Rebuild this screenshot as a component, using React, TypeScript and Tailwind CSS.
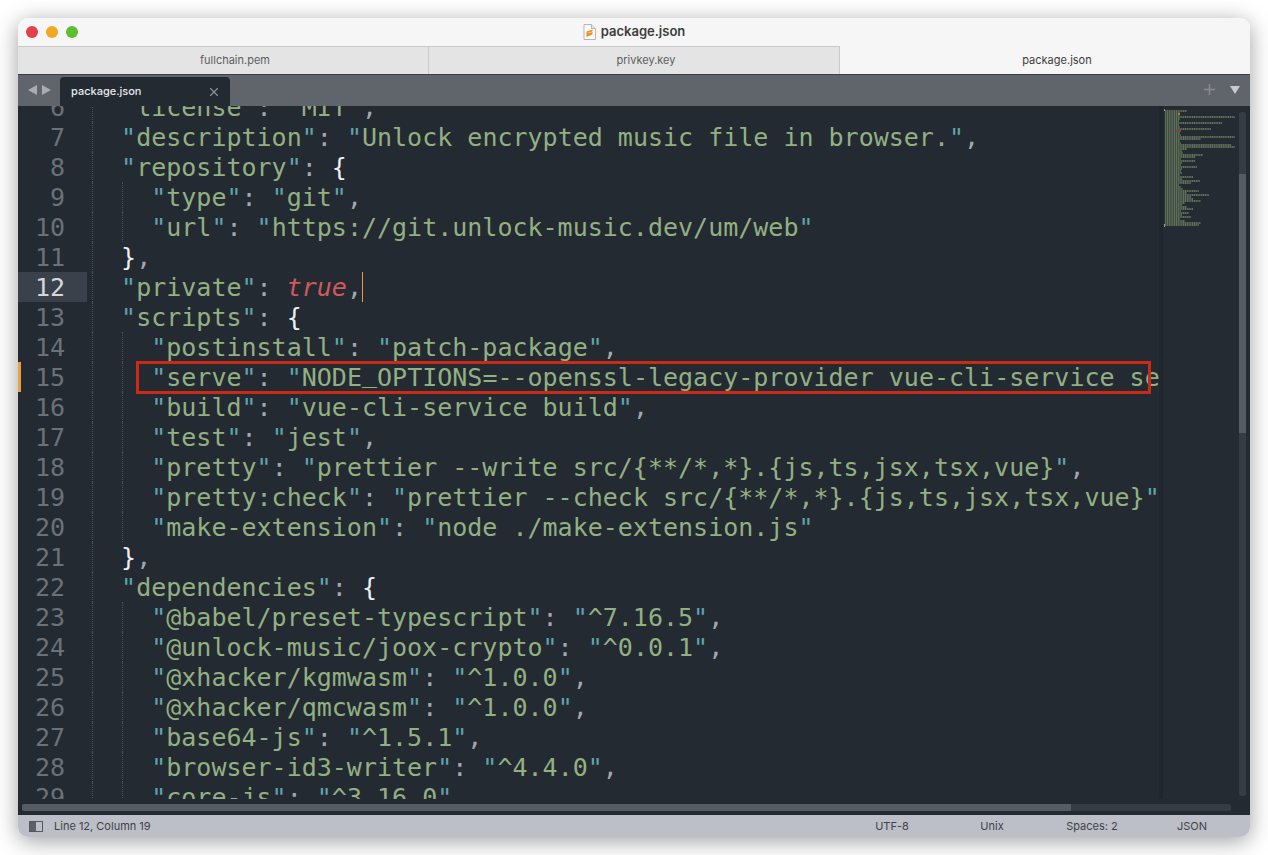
import { X } from 'lucide-react'
import type { ReactNode } from 'react'

// one token per kind of syntax colour
const Q = () => <span className="text-[#5fa3ad]">"</span>
const Str = ({ children }: { children: ReactNode }) => (
  <>
    <Q />
    <span className="text-[#93b082]">{children}</span>
    <Q />
  </>
)
const P = ({ children }: { children: string }) => <span className="text-[#a3a8b0]">{children}</span>
const Brace = ({ children }: { children: string }) => <span className="text-[#eceef0]">{children}</span>

const kv = (key: string, value: ReactNode, comma = true) => (
  <>
    <Str>{key}</Str>
    <P>: </P>
    <Str>{value}</Str>
    {comma && <P>,</P>}
  </>
)
const open = (key: string) => (
  <>
    <Str>{key}</Str>
    <P>: </P>
    <Brace>{'{'}</Brace>
  </>
)
const close = (
  <>
    <Brace>{'}'}</Brace>
    <P>,</P>
  </>
)

const lines: { n: number; level: number; code: ReactNode }[] = [
  { n: 6, level: 1, code: kv('license', 'MIT') },
  { n: 7, level: 1, code: kv('description', 'Unlock encrypted music file in browser.') },
  { n: 8, level: 1, code: open('repository') },
  { n: 9, level: 2, code: kv('type', 'git') },
  { n: 10, level: 2, code: kv('url', 'https://git.unlock-music.dev/um/web', false) },
  { n: 11, level: 1, code: close },
  {
    n: 12,
    level: 1,
    code: (
      <>
        <Str>private</Str>
        <P>: </P>
        <span className="italic text-[#d0595c]">true</span>
        <P>,</P>
        <span className="-mt-px inline-block h-[30px] w-px bg-[#e6993f] align-top" />
      </>
    ),
  },
  { n: 13, level: 1, code: open('scripts') },
  { n: 14, level: 2, code: kv('postinstall', 'patch-package') },
  {
    n: 15,
    level: 2,
    code: kv(
      'serve',
      <>
        NODE<span className="relative -top-[4px]">_</span>OPTIONS=--openssl-legacy-provider vue-cli-service serve
      </>,
    ),
  },
  { n: 16, level: 2, code: kv('build', 'vue-cli-service build') },
  { n: 17, level: 2, code: kv('test', 'jest') },
  { n: 18, level: 2, code: kv('pretty', 'prettier --write src/{**/*,*}.{js,ts,jsx,tsx,vue}') },
  { n: 19, level: 2, code: kv('pretty:check', 'prettier --check src/{**/*,*}.{js,ts,jsx,tsx,vue}') },
  { n: 20, level: 2, code: kv('make-extension', 'node ./make-extension.js', false) },
  { n: 21, level: 1, code: close },
  { n: 22, level: 1, code: open('dependencies') },
  { n: 23, level: 2, code: kv('@babel/preset-typescript', '^7.16.5') },
  { n: 24, level: 2, code: kv('@unlock-music/joox-crypto', '^0.0.1') },
  { n: 25, level: 2, code: kv('@xhacker/kgmwasm', '^1.0.0') },
  { n: 26, level: 2, code: kv('@xhacker/qmcwasm', '^1.0.0') },
  { n: 27, level: 2, code: kv('base64-js', '^1.5.1') },
  { n: 28, level: 2, code: kv('browser-id3-writer', '^4.4.0') },
  { n: 29, level: 2, code: kv('core-js', '^3.16.0') },
]

// minimap row widths, 2px per row, read off the screenshot
const miniRows = [
  22, 15, 15, 70, 15, 14, 57, 14, 15, 46, 12, 15, 16, 70, 36, 15, 16, 66, 70, 22, 17, 18, 38, 30, 16, 30, 17, 16,
  32, 17, 16, 17, 15, 28, 17, 35, 26, 14, 16, 18, 34, 22, 44, 26, 28, 36, 20, 17, 22, 28, 16, 24, 17, 26, 15, 20,
  36, 34,
]

function Minimap() {
  const d = miniRows.map((w, i) => `M2 ${i * 2 + 5}h${w}`).join('')
  return (
    <svg width="76" height="130" viewBox="0 0 76 130" className="shrink-0">
      <path d={d} stroke="#5f7059" strokeWidth="1.8" strokeDasharray="1.3 0.5" fill="none" />
      <rect x="15" y="7" width="2" height="2" fill="#b8793a" />
      <rect x="13" y="24" width="5" height="2" fill="#8a3f45" />
      <rect x="1" y="3" width="1" height="2" fill="#9a9da3" />
      <rect x="1" y="118" width="1" height="3" fill="#9a9da3" />
    </svg>
  )
}

function SublimeFile() {
  return (
    <svg width="13" height="16" viewBox="0 0 13 16" className="shrink-0">
      <path d="M1 .5h7.5L12.5 4.500V15.500H1z" fill="#fafafa" stroke="#b5b5b5" />
      <path d="M8.500.5V4.500h4" fill="#e8e8e8" stroke="#b5b5b5" />
      <path d="M3.500 7.500 9.500 5.800v1.800L3.500 9.300zM3.500 9.800l6-1.700v1.900l-6 1.700zM3.500 8.800 9.500 10.300 3.500 13z" fill="#f08c1e" />
    </svg>
  )
}

export default function App() {
  return (
    <div className="h-screen overflow-hidden bg-white px-[18px] pt-[18px] font-['Inter',sans-serif]">
      <div className="relative flex h-[819px] flex-col overflow-hidden rounded-[10px] shadow-[0_4px_22px_rgba(0,0,0,0.38)]">
        {/* Title bar */}
        <div className="relative flex h-[28px] shrink-0 items-center justify-center gap-[5px] bg-[#f6f6f6]">
          <div className="absolute left-[8px] top-[8px] flex gap-[8px]">
            <span className="h-3 w-3 rounded-full bg-[#e2404a]" />
            <span className="h-3 w-3 rounded-full bg-[#f2a823]" />
            <span className="h-3 w-3 rounded-full bg-[#5fbe2f]" />
          </div>
          <SublimeFile />
          <span className="text-[13px] font-semibold text-[#3c3c3c]">package.json</span>
        </div>

        {/* File tabs */}
        <div className="flex h-[28px] shrink-0 text-[11px]">
          <div className="flex w-[410px] items-center justify-center border-t border-[#c9c9c9] bg-[#e4e4e4] pl-[24px] text-[#5d5d5d]">
            fullchain.pem
          </div>
          <div className="flex w-[412px] items-center justify-center border-x border-t border-[#c9c9c9] bg-[#e4e4e4] pl-[24px] text-[#5d5d5d]">
            privkey.key
          </div>
          <div className="flex flex-1 items-center justify-center bg-[#f6f6f6] pl-[24px] text-[#3c3c3c]">
            package.json
          </div>
        </div>

        {/* Sublime tab bar */}
        <div className="flex h-[32px] shrink-0 items-end border-t border-[#3c3f44] bg-[#60646b]">
          <div className="flex h-full w-[42px] items-center gap-[5px] pb-[2px] pl-[10px]">
            <svg width="9" height="10" viewBox="0 0 9 10">
              <path d="M9 0v10L0 5z" fill="#a9acb1" />
            </svg>
            <svg width="9" height="10" viewBox="0 0 9 10">
              <path d="M0 0v10l9-5z" fill="#a9acb1" />
            </svg>
          </div>
          <div className="flex h-[29px] w-[170px] items-center justify-between rounded-t-[4px] bg-[#232a32] pl-[11px] pr-[9px] text-[11px] font-medium text-[#e8eaec]">
            package.json
            <X size={14} strokeWidth={2} className="text-[#8b9096]" />
          </div>
          <div className="flex h-full flex-1 items-center justify-end gap-[15px] pb-[2px] pr-[10px]">
            <svg width="11" height="11" viewBox="0 0 11 11">
              <path d="M5.500 0v11M0 5.500h11" stroke="#8a8d92" strokeWidth="1.500" />
            </svg>
            <svg width="10" height="8" viewBox="0 0 10 8">
              <path d="M0 0h10L5 8z" fill="#c8cacd" />
            </svg>
          </div>
        </div>

        {/* Editor */}
        <div className="relative flex min-h-0 flex-1 flex-col bg-[#232a32]">
          <div className="flex min-h-0 flex-1">
            <div className="min-w-0 flex-1 overflow-hidden font-['DejaVu_Sans_Mono',monospace] text-[25px] leading-[30px]">
              <div className="-mt-[14px]">
                {lines.map((line) => (
                  <div key={line.n} className="flex h-[30px]">
                    <div
                      className={`relative w-[69px] shrink-0 pr-[22px] pt-px text-right ${
                        line.n === 12 ? 'bg-[#3a414b] text-[#d4d6da]' : 'text-[#6b7079]'
                      }`}
                    >
                      {line.n === 15 && <span className="absolute left-0 top-0 h-[30px] w-[3px] bg-[#e9a23f]" />}
                      {line.n}
                    </div>
                    <div className="min-w-0 flex-1 whitespace-pre pl-[5px] pt-px">
                      {Array.from({ length: line.level }).map((_, i) => (
                        <span
                          key={i}
                          className="-mt-px inline-block h-[30px] w-[2ch] border-l border-dotted border-[#4b515b] align-top"
                        />
                      ))}
                      <span className="-ml-px">{line.code}</span>
                    </div>
                  </div>
                ))}
              </div>
            </div>
            {/* Minimap and vertical scrollbar */}
            <div className="flex w-[91px] shrink-0 border-l-4 border-[#20262d] bg-[#242b33]">
              <Minimap />
              <div className="mb-[3px] mt-[6px] w-[7px] rounded-[2px] bg-[#363b44] pt-[62px]">
                <div className="h-[259px] bg-[#575b63]" />
              </div>
            </div>
          </div>
          {/* Horizontal scrollbar */}
          <div className="h-[16px] shrink-0 px-[4px] pt-[5px]">
            <div className="h-[7px] w-[1209px] rounded-[2px] bg-[#363b44]">
              <div className="h-full w-[1049px] rounded-l-[2px] bg-[#575b63]" />
            </div>
          </div>
          {/* Annotation box */}
          <div className="absolute left-[118px] top-[255px] h-[33px] w-[1015px] border-[3px] border-[#cc2a14]" />
        </div>

        {/* Status bar */}
        <div className="flex h-[22px] shrink-0 items-center bg-[#bcbfc7] text-[11px] text-[#3f4146]">
          <div className="ml-[11px] flex h-[11px] w-[14px] border border-[#55585e]">
            <span className="w-[6px] bg-[#5d6066]" />
          </div>
          <span className="ml-[11px] flex-1">Line 12, Column 19</span>
          <span className="w-[100px] text-center">UTF-8</span>
          <span className="w-[100px] text-center">Unix</span>
          <span className="w-[100px] text-center">Spaces: 2</span>
          <span className="mr-[8px] w-[100px] text-center">JSON</span>
        </div>
      </div>
    </div>
  )
}
